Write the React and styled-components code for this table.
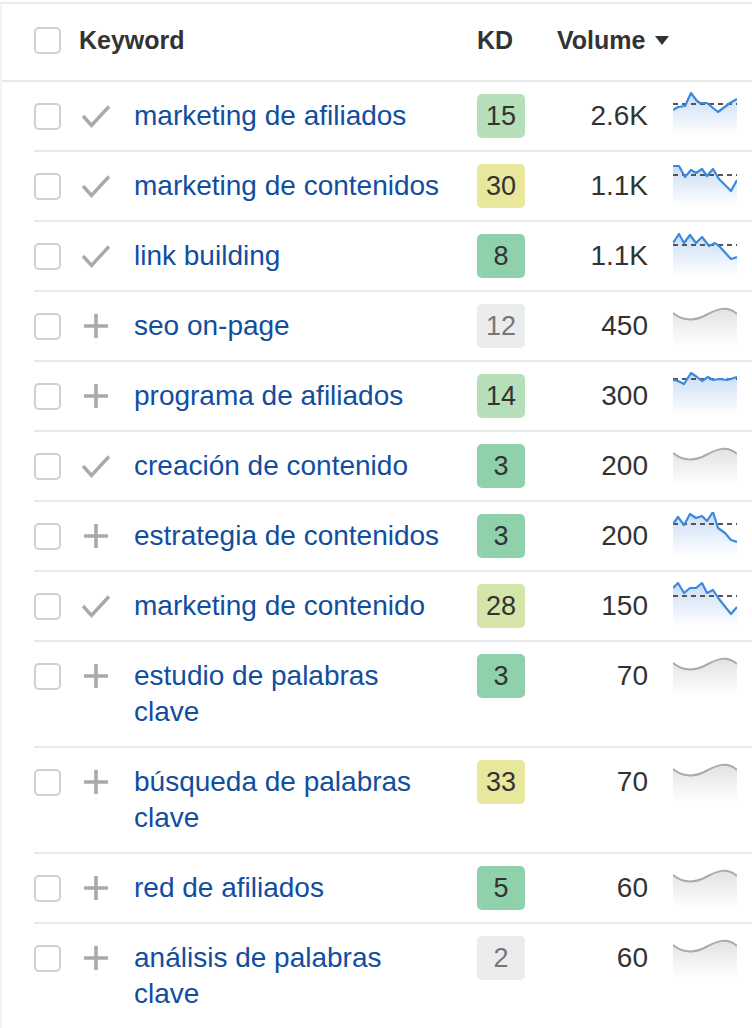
import React from "react";
import styled, { createGlobalStyle } from "styled-components";

const GlobalStyle = createGlobalStyle`
  body {
    margin: 0;
    background: #fff;
    font-family: "Liberation Sans", Arial, sans-serif;
    color: #333;
  }
`;

const WAVE = "M0 11 C10 19 22 19 33 13 C44 7 54 3 64 12";

const rows = [
  { kw: "marketing de afiliados", done: true, kd: 15, tone: "light", vol: "2.6K", avg: 12,
    trend: [[0, 18], [5, 15], [12, 14], [18, 1], [24, 9], [27, 11], [34, 11], [45, 20], [57, 11], [64, 7]] },
  { kw: "marketing de contenidos", done: true, kd: 30, tone: "yellow", vol: "1.1K", avg: 13,
    trend: [[0, 4], [6, 4], [12, 15], [18, 8], [23, 11], [29, 7], [34, 14], [40, 7], [46, 17], [58, 29], [64, 18]] },
  { kw: "link building", done: true, kd: 8, tone: "green", vol: "1.1K", avg: 13,
    trend: [[0, 11], [6, 2], [11, 11], [17, 3], [23, 11], [29, 5], [36, 14], [42, 11], [47, 15], [58, 27], [64, 25]] },
  { kw: "seo on-page", done: false, kd: 12, tone: "gray", vol: "450" },
  { kw: "programa de afiliados", done: false, kd: 14, tone: "light", vol: "300", avg: 7,
    trend: [[0, 8], [5, 9], [11, 12], [18, 1], [24, 5], [29, 9], [35, 5], [40, 8], [47, 7], [54, 8], [64, 5]] },
  { kw: "creación de contenido", done: true, kd: 3, tone: "green", vol: "200" },
  { kw: "estrategia de contenidos", done: false, kd: 3, tone: "green", vol: "200", avg: 12,
    trend: [[0, 12], [5, 5], [11, 13], [17, 2], [23, 6], [29, 4], [34, 9], [40, 0], [45, 16], [52, 21], [58, 28], [64, 30]] },
  { kw: "marketing de contenido", done: true, kd: 28, tone: "lime", vol: "150", avg: 14,
    trend: [[0, 6], [5, 1], [11, 11], [17, 6], [23, 6], [29, 1], [34, 11], [40, 8], [46, 17], [58, 32], [64, 25]] },
  { kw: "estudio de palabras clave", done: false, kd: 3, tone: "green", vol: "70" },
  { kw: "búsqueda de palabras clave", done: false, kd: 33, tone: "yellow", vol: "70" },
  { kw: "red de afiliados", done: false, kd: 5, tone: "green", vol: "60" },
  { kw: "análisis de palabras clave", done: false, kd: 2, tone: "gray", vol: "60" },
];

const tones = {
  light: { bg: "#b4dfb9", fg: "#333" },
  yellow: { bg: "#e9e79b", fg: "#333" },
  green: { bg: "#8ed1ab", fg: "#333" },
  lime: { bg: "#d5e5a9", fg: "#333" },
  gray: { bg: "#ebecee", fg: "#777" },
};

const Sparkline = ({ id, trend, avg }) => {
  const blue = Boolean(trend);
  const line = blue
    ? "M" + trend.map(([x, y]) => `${x} ${y}`).join(" L")
    : WAVE;
  const area = `${line} L64 44 L0 44 Z`;
  return (
    <svg width="64" height="44" viewBox="0 0 64 44">
      <defs>
        <linearGradient id={id} x1="0" y1="0" x2="0" y2="1">
          <stop offset="0" stopColor={blue ? "#c9dcf4" : "#e2e2e2"} />
          <stop offset="1" stopColor="#ffffff" />
        </linearGradient>
      </defs>
      <path d={area} fill={`url(#${id})`} />
      {blue && (
        <line x1="0" y1={avg} x2="64" y2={avg} stroke="#555" strokeWidth="2" strokeDasharray="5 4" />
      )}
      <path
        d={line}
        fill="none"
        stroke={blue ? "#3a8ae0" : "#aaa"}
        strokeWidth={blue ? 2.2 : 2}
        strokeLinejoin="round"
      />
    </svg>
  );
};

const CheckIcon = () => (
  <svg width="28" height="28" viewBox="0 0 28 28">
    <polyline points="1,14 9.5,23.5 27,4.5" fill="none" stroke="#a9a9a9" strokeWidth="3.4" />
  </svg>
);

const PlusIcon = () => (
  <svg width="28" height="28" viewBox="0 0 28 28">
    <path d="M14 2 V26 M2 14 H26" stroke="#a9a9a9" strokeWidth="3.6" />
  </svg>
);

const App = () => (
  <>
    <GlobalStyle />
    <Table>
      <Head>
        <Checkbox />
        <HeadLabel>Keyword</HeadLabel>
        <HeadLabel>KD</HeadLabel>
        <HeadLabel>
          Volume
          <svg width="14" height="9" viewBox="0 0 14 9">
            <polygon points="0,0 14,0 7,9" fill="#333" />
          </svg>
        </HeadLabel>
      </Head>
      {rows.map((r, i) => (
        <Row key={r.kw}>
          <Cell>
            <Checkbox />
          </Cell>
          <Cell>{r.done ? <CheckIcon /> : <PlusIcon />}</Cell>
          <Keyword href="#">{r.kw}</Keyword>
          <Badge $tone={r.tone}>{r.kd}</Badge>
          <Volume>{r.vol}</Volume>
          <Chart>
            <Sparkline id={`spark-${i}`} trend={r.trend} avg={r.avg} />
          </Chart>
        </Row>
      ))}
    </Table>
  </>
);

const Table = styled.div`
  margin-top: 2px;
  height: 1026px;
  overflow: hidden;
  border-top: 2px solid #ebebeb;
  border-left: 2px solid #f4f4f4;
`;

const Head = styled.div`
  display: grid;
  grid-template-columns: 45px 398px 80px 1fr;
  align-items: center;
  height: 73px;
  padding: 0 0 3px 32px;
  border-bottom: 2px solid #e8e8e8;
`;

const HeadLabel = styled.div`
  display: flex;
  align-items: center;
  gap: 10px;
  font-size: 25px;
  font-weight: bold;
  color: #333;
`;

const Checkbox = styled.span`
  display: block;
  width: 27px;
  height: 27px;
  box-sizing: border-box;
  border: 2px solid #d0d0d0;
  border-radius: 5px;
  background: #fff;
`;

const Row = styled.div`
  display: grid;
  grid-template-columns: 48px 52px 343px 48px 123px 1fr;
  align-items: start;
  margin-left: 32px;
  padding: 16px 0;
  border-bottom: 2px solid #e9e9e9;

  &:last-child {
    border-bottom: none;
  }
`;

const Cell = styled.div`
  height: 36px;
  display: flex;
  align-items: center;
`;

const Keyword = styled.a`
  max-width: 312px;
  font-size: 28px;
  line-height: 36px;
  color: #114ea0;
  text-decoration: none;
`;

const Badge = styled.div`
  height: 44px;
  margin: -4px 0;
  border-radius: 5px;
  display: flex;
  align-items: center;
  justify-content: center;
  font-size: 27px;
  background: ${(p) => tones[p.$tone].bg};
  color: ${(p) => tones[p.$tone].fg};
`;

const Volume = styled.div`
  font-size: 28px;
  line-height: 36px;
  text-align: right;
  color: #333;
`;

const Chart = styled.div`
  margin: -6px 0 -2px;
  padding-left: 25px;
  height: 44px;

  svg {
    display: block;
  }
`;

export default App;
